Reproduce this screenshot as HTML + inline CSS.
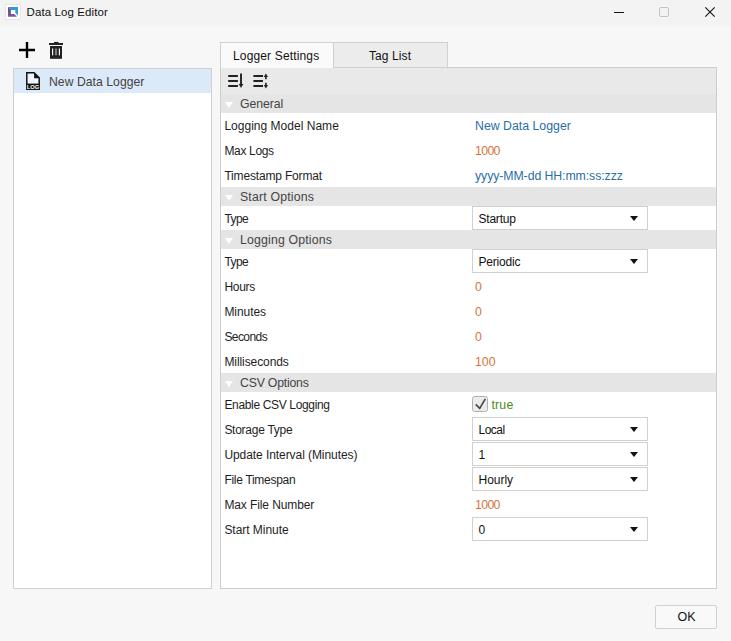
<!DOCTYPE html>
<html><head><meta charset="utf-8">
<title>Data Log Editor</title>
<style>
html,body{margin:0;padding:0}
body{width:731px;height:641px;background:#f7f7f7;overflow:hidden;position:relative;font-family:"Liberation Sans","DejaVu Sans",sans-serif;font-size:12.5px;color:#1e1e1e}
.abs{position:absolute}
#titlebar{left:0;top:0;width:731px;height:27px;background:#f3f3f3}
#title{left:26.6px;top:6.4px;font-size:11.5px;color:#111;white-space:nowrap}
#list{left:13px;top:68px;width:197px;height:519px;background:#fff;border:1px solid #d0d0d0}
#sel{left:14px;top:69px;width:197px;height:24px;background:#dbe9f8}
#selt{left:49px;top:75.3px;color:#444;white-space:nowrap;font-size:12.2px}
.tab{top:42px;height:26px;border:1px solid #d0d0d0;border-bottom:none;box-sizing:border-box;white-space:nowrap;color:#111}
.tab span{position:absolute;top:6px;font-size:12px}
#tab1{left:220px;width:114px;background:#fafafa}
#tab2{left:333px;width:115px;background:#ececec;border-bottom:1px solid #d0d0d0}
#panel{left:220px;top:67px;width:495px;height:520px;background:#fff;border:1px solid #cdcdcd}
#tool{left:221px;top:68px;width:495px;height:26px;background:#e9e9e9}
.hdr{left:221px;width:495px;height:19px;background:#e5e5e5}
.hdr span{position:absolute;left:19px;top:3px;color:#444;white-space:nowrap;font-size:12.3px}
.hdr i{position:absolute;left:3.6px;top:7.8px;width:0;height:0;border-left:4.3px solid transparent;border-right:4.3px solid transparent;border-top:6.8px solid #fff}
.lbl{left:224.4px;white-space:nowrap;color:#1e1e1e;font-size:12px}
.val{left:475px;white-space:nowrap;font-size:12.3px}
.blue{color:#2a6ea6}.org{color:#d4763a}.grn{color:#4a8c22}
.dd{left:472px;width:176px;height:24px;font-size:12px;box-sizing:border-box;border:1px solid #d0d0d0;background:#fff}
.dd span{position:absolute;left:5.5px;top:4.5px;color:#111;white-space:nowrap}
.dd i{position:absolute;left:157px;top:9px;width:0;height:0;border-left:4.5px solid transparent;border-right:4.5px solid transparent;border-top:5.5px solid #111}
#ok{left:655px;top:605px;width:62px;height:24px;box-sizing:border-box;border:1px solid #d0d0d0;border-radius:2px;background:#f9f9f9;text-align:center;line-height:22px;color:#111;font-size:12.5px;padding-left:1px}
</style></head><body>
<div class="abs" id="titlebar"></div>
<svg class="abs" style="left:5px;top:4px" width="16" height="16" viewBox="0 0 16 16"><defs><linearGradient id="gb" x1="0" y1="0" x2="1" y2="0"><stop offset="0" stop-color="#3f8fb4"/><stop offset="1" stop-color="#2f9ee2"/></linearGradient><linearGradient id="gp" x1="0" y1="0" x2="0" y2="1"><stop offset="0" stop-color="#5f4a86"/><stop offset="1" stop-color="#84559a"/></linearGradient></defs><rect x="0.5" y="0.5" width="15" height="15" fill="#fff" stroke="#e6e6e6"/><path d="M3 3H13V11.6L10.3 8.9V5.9H5.9Z" fill="url(#gb)"/><path d="M3 3L5.9 5.9V10H9.2L12 12.8H3Z" fill="url(#gp)"/></svg>
<div class="abs" id="title" style="letter-spacing:0.09px">Data Log Editor</div>
<svg class="abs" style="left:610px;top:4px" width="110" height="18" viewBox="0 0 110 18"><path d="M4 8.5h10" stroke="#111" stroke-width="1"/><rect x="49.5" y="3.5" width="9" height="9" rx="1.5" fill="none" stroke="#c4c4c4"/><path d="M95.3 3.3l9.4 9.4M104.7 3.3l-9.4 9.4" stroke="#111" stroke-width="1.1"/></svg>

<svg class="abs" style="left:18px;top:41px" width="18" height="18" viewBox="0 0 18 18"><path d="M9 1v16M1 9h16" stroke="#000" stroke-width="2.4" fill="none"/></svg>
<svg class="abs" style="left:49px;top:41px" width="14" height="18" viewBox="0 0 14 18"><rect x="5" y="0.9" width="4.5" height="1.5" fill="#222"/><rect x="0" y="2" width="14" height="2" fill="#222"/><rect x="1" y="5" width="12" height="12.8" fill="#222"/><rect x="3" y="7.5" width="1.2" height="6.8" fill="#fff"/><rect x="9.8" y="7.5" width="1.2" height="6.8" fill="#fff"/><rect x="6.4" y="7.5" width="1.2" height="6.8" fill="#c4c4c4"/></svg>

<div class="abs" id="list"></div>
<div class="abs" id="sel"></div>
<svg class="abs" style="left:26px;top:72px" width="14" height="18" viewBox="0 0 14 18"><path d="M0.8 0.8h7.3l5.1 5.1V17H0.8z" fill="#edf4fc" stroke="#111" stroke-width="1.5"/><path d="M8.1 0.8v5.4H13.5z" fill="#111"/><rect x="0" y="11.6" width="14" height="6.2" fill="#111"/><text x="7" y="16.7" font-family="Liberation Sans, sans-serif" font-weight="bold" font-size="5.8" fill="#fff" text-anchor="middle">LOG</text></svg>
<div class="abs" id="selt" style="letter-spacing:0.04px">New Data Logger</div>

<div class="abs" id="panel"></div>
<div class="abs tab" id="tab2"><span style="left:35px;letter-spacing:0.1px">Tag List</span></div>
<div class="abs tab" id="tab1"><span style="left:12px;letter-spacing:0.15px">Logger Settings</span></div>
<div class="abs" id="tool"></div>
<svg class="abs" style="left:228px;top:73px" width="17" height="16" viewBox="0 0 17 16"><path d="M0.2 3.1h9.7M0.2 8h9.7M0.2 12.9h9.7" stroke="#222" stroke-width="2"/><path d="M13 0.4v11.6" stroke="#222" stroke-width="1.9"/><path d="M10.7 11.1h4.6l-2.3 4z" fill="#222"/></svg>
<svg class="abs" style="left:253px;top:73px" width="17" height="16" viewBox="0 0 17 16"><path d="M0.4 3.1h9.6M0.4 8h9.6M0.4 12.9h9.6" stroke="#222" stroke-width="2"/><path d="M12.9 3v3.2M12.9 9.8v3.2" stroke="#222" stroke-width="1.6"/><path d="M10.8 4.1h4.2l-2.1-3.7zM10.8 11.9h4.2l-2.1 3.7z" fill="#222"/></svg>

<div class="abs hdr" style="top:94px"><i></i><span style="letter-spacing:-0.1px">General</span></div>
<div class="abs lbl" style="top:119px;letter-spacing:0.02px">Logging Model Name</div><div class="abs val blue" style="top:119px;letter-spacing:0.01px">New Data Logger</div>
<div class="abs lbl" style="top:144px;letter-spacing:-0.33px">Max Logs</div><div class="abs val org" style="top:144px;letter-spacing:-0.64px">1000</div>
<div class="abs lbl" style="top:169px;letter-spacing:-0.17px">Timestamp Format</div><div class="abs val blue" style="top:169px;letter-spacing:-0.08px">yyyy-MM-dd HH:mm:ss:zzz</div>
<div class="abs hdr" style="top:187px"><i></i><span style="letter-spacing:0.17px">Start Options</span></div>
<div class="abs lbl" style="top:212px;letter-spacing:-0.58px">Type</div><div class="abs dd" style="top:206px"><span style="letter-spacing:-0.22px">Startup</span><i></i></div>
<div class="abs hdr" style="top:230px"><i></i><span style="letter-spacing:0.16px">Logging Options</span></div>
<div class="abs lbl" style="top:255px;letter-spacing:-0.58px">Type</div><div class="abs dd" style="top:249px"><span style="letter-spacing:-0.21px">Periodic</span><i></i></div>
<div class="abs lbl" style="top:280px;letter-spacing:-0.3px">Hours</div><div class="abs val org" style="top:280px">0</div>
<div class="abs lbl" style="top:305px;letter-spacing:-0.05px">Minutes</div><div class="abs val org" style="top:305px">0</div>
<div class="abs lbl" style="top:330px;letter-spacing:-0.57px">Seconds</div><div class="abs val org" style="top:330px">0</div>
<div class="abs lbl" style="top:355px;letter-spacing:-0.08px">Milliseconds</div><div class="abs val org" style="top:355px">100</div>
<div class="abs hdr" style="top:373px"><i></i><span style="letter-spacing:-0.22px">CSV Options</span></div>
<div class="abs lbl" style="top:398px;letter-spacing:-0.34px">Enable CSV Logging</div>
<svg class="abs" style="left:472px;top:396px" width="16" height="16" viewBox="0 0 16 16"><rect x="0.5" y="0.5" width="15" height="15" rx="2" fill="#ececec" stroke="#b0b0b0"/><path d="M3.8 8.3l3.9 4.1L13.3 2.9" fill="none" stroke="#4a4a4a" stroke-width="1.7"/></svg>
<div class="abs grn" style="left:491.5px;top:398px;font-size:12.3px;letter-spacing:0.18px">true</div>
<div class="abs lbl" style="top:423px;letter-spacing:-0.27px">Storage Type</div><div class="abs dd" style="top:417px"><span style="letter-spacing:-0.51px">Local</span><i></i></div>
<div class="abs lbl" style="top:448px;letter-spacing:-0.07px">Update Interval (Minutes)</div><div class="abs dd" style="top:442px"><span>1</span><i></i></div>
<div class="abs lbl" style="top:473px;letter-spacing:-0.29px">File Timespan</div><div class="abs dd" style="top:467px"><span style="letter-spacing:-0.02px">Hourly</span><i></i></div>
<div class="abs lbl" style="top:498px;letter-spacing:-0.1px">Max File Number</div><div class="abs val org" style="top:498px;letter-spacing:-0.64px">1000</div>
<div class="abs lbl" style="top:523px;letter-spacing:-0.04px">Start Minute</div><div class="abs dd" style="top:517px"><span>0</span><i></i></div>

<div class="abs" id="ok">OK</div>
</body></html>
